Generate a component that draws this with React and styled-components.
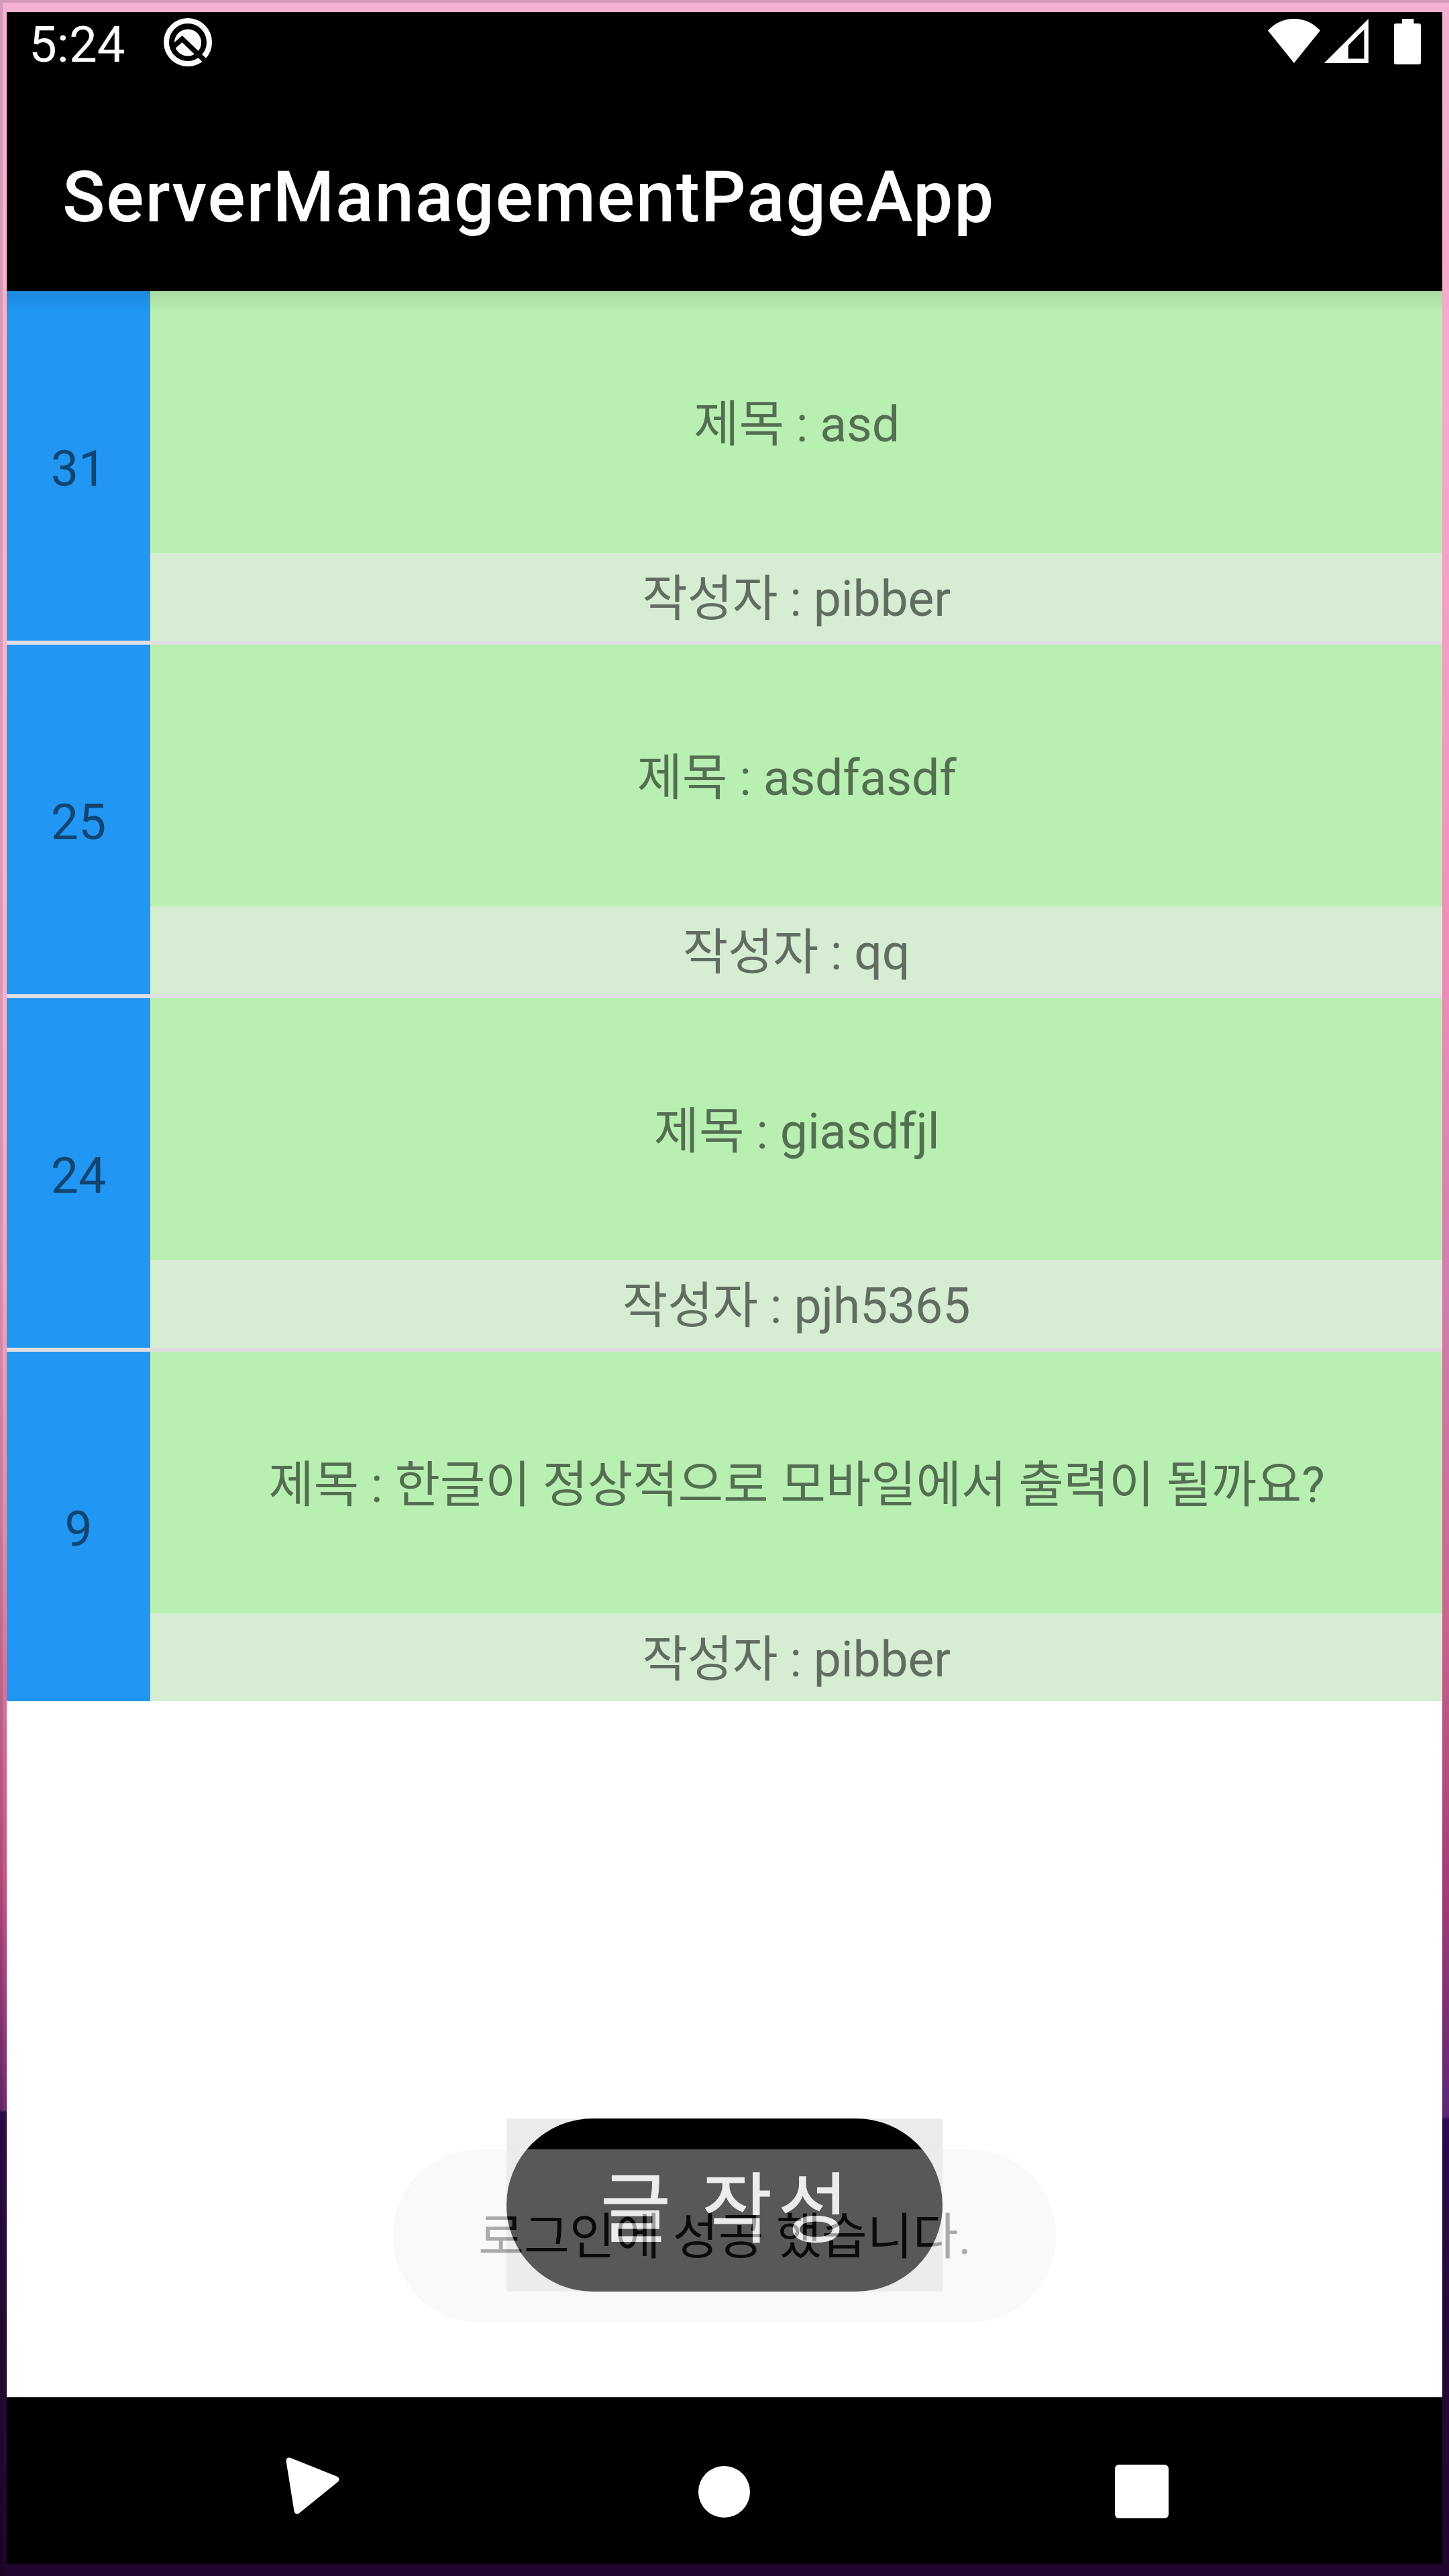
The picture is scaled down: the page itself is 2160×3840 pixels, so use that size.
import React from 'react';
import styled, { createGlobalStyle } from 'styled-components';

const posts = [
  { id: 31, title: 'asd', writer: 'pibber' },
  { id: 25, title: 'asdfasdf', writer: 'qq' },
  { id: 24, title: 'giasdfjl', writer: 'pjh5365' },
  { id: 9, title: '한글이 정상적으로 모바일에서 출력이 될까요?', writer: 'pibber' },
];

const App = () => {
  return (
    <Wallpaper>
      <GlobalStyle />
      <Screen>
        <StatusBar>
          <Clock>5:24</Clock>
          <DebugIcon viewBox="0 0 72 72">
            <circle cx="36" cy="36" r="32" fill="none" stroke="#fff" strokeWidth="8" />
            <circle cx="36" cy="36.5" r="20" fill="#fff" />
            <path d="M13 44L27.5 31L62 64" fill="none" stroke="#000" strokeWidth="7.5" />
          </DebugIcon>
          <StatusIcons>
            <svg width="78" height="66" viewBox="0 0 78 66" fill="#fff">
              <path d="M0 17.5C10 7 23 0 39 0S68 7 78 17.5L39 66Z" />
            </svg>
            <SignalIcon width="66" height="66" viewBox="0 0 66 66" fill="#fff">
              <path fillRule="evenodd" d="M66 0V66H0ZM59.5 16L36 39.5V59.5H59.5Z" />
            </SignalIcon>
            <BatteryIcon width="40" height="68" viewBox="0 0 40 68" fill="#fff">
              <path d="M12 0H29.5V7H37Q40 7 40 10V65Q40 68 37 68H3Q0 68 0 65V10Q0 7 3 7H12Z" />
            </BatteryIcon>
          </StatusIcons>
        </StatusBar>
        <AppBar>
          <AppTitle>ServerManagementPageApp</AppTitle>
        </AppBar>
        <Content>
          <PostList>
            {posts.map((post) => (
              <PostRow key={post.id}>
                <PostNumber>{post.id}</PostNumber>
                <PostBody>
                  <PostTitle>제목 : {post.title}</PostTitle>
                  <PostWriter>작성자 : {post.writer}</PostWriter>
                </PostBody>
              </PostRow>
            ))}
          </PostList>
          <WriteArea>
            <WriteButton>글 작성</WriteButton>
          </WriteArea>
          <Toast>로그인에 성공 했습니다.</Toast>
        </Content>
        <NavBar>
          <svg width="82" height="86" viewBox="0 0 82 86">
            <path d="M6 5L76 33L18 80Z" fill="#fff" stroke="#fff" strokeWidth="9" strokeLinejoin="round" />
          </svg>
          <HomeButton />
          <RecentButton />
        </NavBar>
      </Screen>
    </Wallpaper>
  );
};

const GlobalStyle = createGlobalStyle`
  body {
    margin: 0;
    font-family: Roboto, 'Noto Sans CJK KR', sans-serif;
  }

  * {
    box-sizing: border-box;
  }
`;

const Wallpaper = styled.div`
  width: 2160px;
  height: 3840px;
  padding: 18px 10px;
  background:
    linear-gradient(#f4b0d2 0, #f9b4cc 700px, #fbb4cf 1300px, #f3a6c4 1900px, #e08aac 2300px, #c85587 2800px, #722a74 3145px, #2f0b4c 3149px, #240a35 3500px, #20052e 3840px) left / 1080px 100% no-repeat,
    linear-gradient(#f4b0d2 0, #f2a8ca 700px, #ee90b8 1400px, #d080ae 1900px, #c8688f 2400px, #9c3b76 2850px, #5c2673 3155px, #2a0b4c 3160px, #240a35 3500px, #20052e 3840px) right / 1080px 100% no-repeat;
  box-shadow: inset 4px 4px 0 rgba(0, 0, 0, 0.13);
`;

const Screen = styled.main`
  display: flex;
  flex-direction: column;
  height: 3804px;
  background: #fff;
`;

const StatusBar = styled.div`
  display: flex;
  align-items: flex-start;
  height: 126px;
  padding: 0 32px 0 33px;
  background: #000;
`;

const Clock = styled.span`
  margin-top: 4px;
  width: 201px;
  color: #fff;
  font-size: 74.5px;
  line-height: 90px;
`;

const DebugIcon = styled.svg`
  width: 72px;
  height: 72px;
  margin-top: 9px;
`;

const StatusIcons = styled.div`
  display: flex;
  margin: 10px 0 0 auto;
`;

const SignalIcon = styled.svg`
  margin-left: 6px;
`;

const BatteryIcon = styled.svg`
  margin-left: 38px;
`;

const AppBar = styled.header`
  display: flex;
  align-items: center;
  height: 290px;
  padding: 12px 84px 0 83px;
  background: #000;
`;

const AppTitle = styled.h1`
  margin: 0;
  color: #fff;
  font-size: 105px;
  font-weight: 500;
  letter-spacing: 1.8px;
  line-height: 124px;
`;

const Content = styled.section`
  position: relative;
  flex: 1;
  display: flex;
  flex-direction: column;

  &::before {
    content: '';
    position: absolute;
    top: 0;
    left: 0;
    right: 0;
    height: 30px;
    background: linear-gradient(rgba(0, 0, 0, 0.09), rgba(0, 0, 0, 0));
  }
`;

const PostList = styled.ul`
  margin: 0;
  padding: 0;
  list-style: none;
`;

const PostRow = styled.li`
  display: flex;
  height: 521px;
  color: rgba(0, 0, 0, 0.54);
  font-size: 73.5px;
  letter-spacing: -0.25px;
  line-height: 88px;

  & + & {
    height: 527px;
    border-top: 6px solid #e0dee0;
  }
`;

const PostNumber = styled.div`
  display: flex;
  align-items: center;
  justify-content: center;
  width: 214px;
  padding-top: 8px;
  background: #2196f3;
  letter-spacing: 0;
`;

const PostBody = styled.div`
  flex: 1;
  display: flex;
  flex-direction: column;
`;

const PostTitle = styled.div`
  display: flex;
  align-items: center;
  justify-content: center;
  height: 390px;
  padding: 8px 0 0 1px;
  background: #b8f0b1;
  white-space: pre;
`;

const PostWriter = styled.div`
  display: flex;
  align-items: center;
  justify-content: center;
  height: 131px;
  padding-top: 6px;
  background: #d6edd3;
  white-space: pre;
`;

const WriteArea = styled.div`
  align-self: center;
  margin-top: 622px;
  background: #ebebeb;
`;

const WriteButton = styled.button`
  display: block;
  width: 650px;
  height: 258px;
  padding: 0 0 7px 9px;
  border: 0;
  border-radius: 129px;
  background: #000;
  color: #ebebeb;
  font-family: inherit;
  font-size: 114px;
  letter-spacing: 9px;
  -webkit-text-stroke: 1px #ebebeb;
`;

const Toast = styled.div`
  position: absolute;
  top: 2770px;
  left: 50%;
  transform: translateX(-50%);
  display: flex;
  align-items: center;
  justify-content: center;
  width: 989px;
  height: 258px;
  padding: 0 0 12px 1px;
  border-radius: 129px;
  background: #efefef;
  color: #1c1c1c;
  font-size: 73.8px;
  white-space: nowrap;
  opacity: 0.369;
`;

const NavBar = styled.nav`
  display: flex;
  align-items: flex-start;
  justify-content: space-between;
  height: 249px;
  padding: 88px 408px 0 415px;
  border-top: 2px solid #2b2b2b;
  background: #000;
`;

const HomeButton = styled.span`
  width: 77px;
  height: 77px;
  margin: 13px 10px 0 0;
  border-radius: 50%;
  background: #fff;
`;

const RecentButton = styled.span`
  width: 80px;
  height: 80px;
  margin-top: 11px;
  border-radius: 6px;
  background: #fff;
`;

export default App;
